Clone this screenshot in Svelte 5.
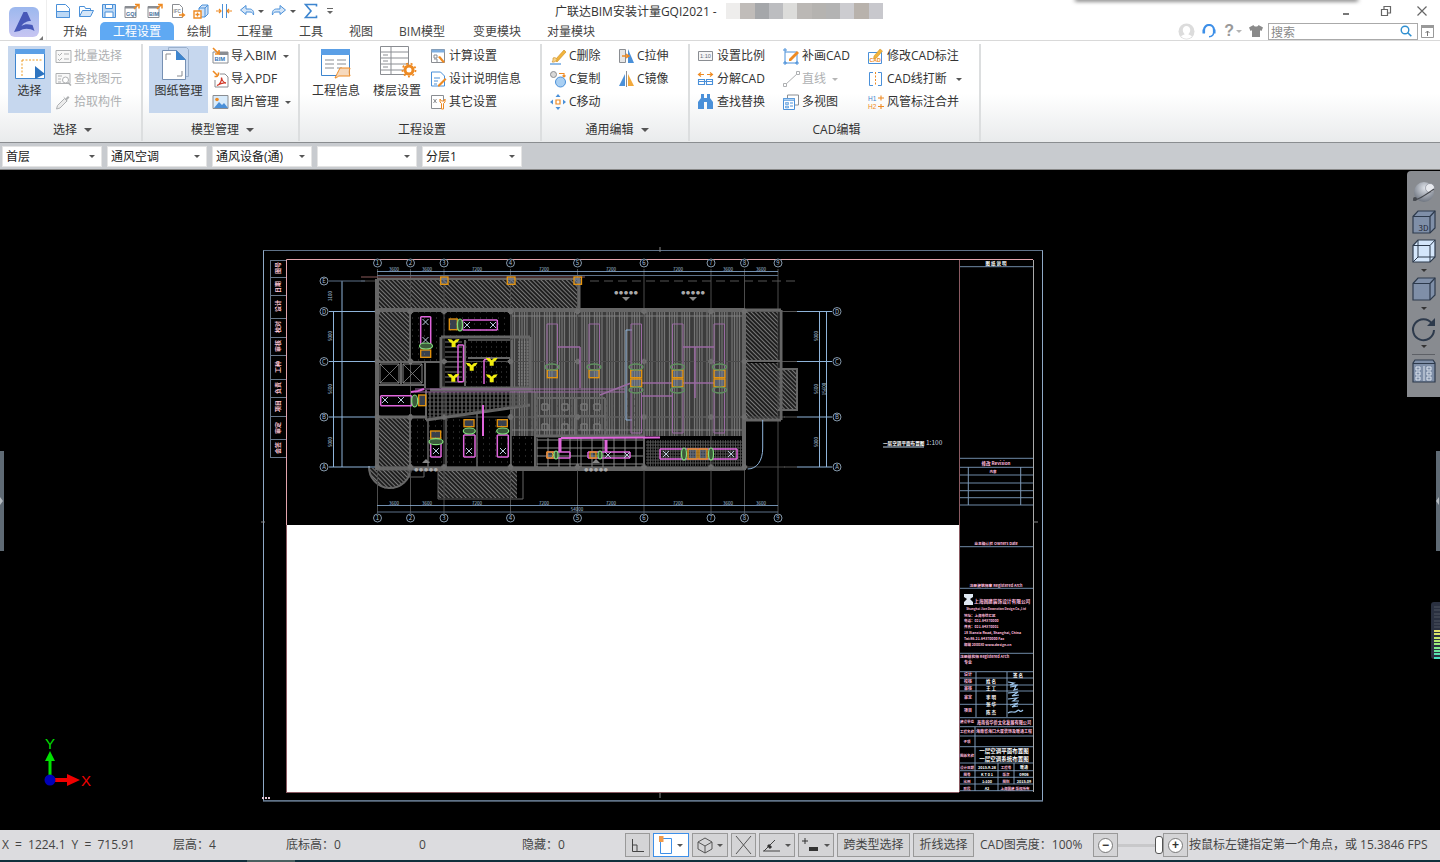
<script>
  const B = '#4a90d9', O = '#ee8a22', G = '#8a8d92', D = '#aeb0b2';
  const icons = {
    new: `<path d="M1.5 1.5h9l4 4v9h-13z" fill="#fff" stroke="${B}"/><path d="M1.5 8.5h13v6h-13z" fill="#bcd8f5" stroke="${B}"/>`,
    open: `<path d="M1.5 13.5v-10h5l1 2h5v2" fill="#fff" stroke="${B}"/><path d="M1.5 13.5l3-6h11l-3 6z" fill="#d5e6f8" stroke="${B}"/>`,
    save: `<path d="M1.5 1.5h13v13h-13z" fill="#bcd8f5" stroke="${B}"/><path d="M4.5 1.5h7v4h-7zM4 9h8v5.5H4z" fill="#fff" stroke="${B}"/>`,
    gqi: `<path d="M1 3.5h11v11H1z" fill="#fff" stroke="${G}"/><path d="M1 3h11v2.5H1z" fill="${G}"/><text x="2" y="12.5" font-size="5.4" font-weight="700" fill="#47709c">GQI</text><path d="M10 6l4-4M11 1.5h4v4" fill="none" stroke="${O}" stroke-width="1.5"/>`,
    bimq: `<path d="M1 3.5h11v11H1z" fill="#fff" stroke="${G}"/><path d="M1 3h11v2.5H1z" fill="${G}"/><text x="2" y="12.5" font-size="5.4" font-weight="700" fill="#47709c">BIM</text><path d="M10 6l4-4M11 1.5h4v4" fill="none" stroke="${O}" stroke-width="1.5"/>`,
    ifc: `<path d="M2.5 1.5h7l3 3v10h-10z" fill="#fff" stroke="${G}"/><text x="3.4" y="10" font-size="4.6" font-weight="700" fill="${G}">IFC</text><path d="M9 12h5M12 10l2.5 2-2.5 2" fill="none" stroke="${O}" stroke-width="1.3"/>`,
    box: `<path d="M6 5l3-3h6v9l-3 3H6z" fill="#cfe2f7" stroke="${B}"/><path d="M6 5h6v9M12 5l3-3" fill="none" stroke="${B}"/><path d="M1 8h7v7H1z" fill="#fff" stroke="${O}" stroke-width="1.4"/><path d="M4.5 9.5v4M2.5 11.5h4" stroke="${O}" stroke-width="1.3"/>`,
    sep: `<path d="M6.5 1v14M10.5 1v14" stroke="${B}"/><path d="M0 8h5M3 6l2 2-2 2M16 8h-5M13 6l-2 2 2 2" fill="none" stroke="${O}" stroke-width="1.2"/>`,
    undo: `<path d="M7 2.5L1.5 7 7 11.5V9h4c2 0 3 1 3.5 3 .7-3.5-1-6-4-6H7z" fill="#d5e6f8" stroke="${B}"/>`,
    redo: `<path d="M9 2.5l5.5 4.5L9 11.5V9H5c-2 0-3 1-3.5 3-.7-3.5 1-6 4-6H9z" fill="#d5e6f8" stroke="${B}"/>`,
    sigma: `<path d="M13.5 3.5V1.5h-11L8 8l-5.5 6.5h11v-2" fill="none" stroke="#3d85cf" stroke-width="1.6"/>`,
    batch: `<path d="M1 2.5h15v12H1z" fill="#f8f8f8" stroke="${D}"/><path d="M3 6l1.5 1.5L7 5M3 11l1.5 1.5L7 10M9 6h5M9 11h5" fill="none" stroke="${D}"/>`,
    find: `<path d="M1 2.5h14v10H1z" fill="#f8f8f8" stroke="${D}"/><path d="M3 5h4M3 8h3M3 11h3" stroke="${D}"/><circle cx="10.5" cy="9" r="3" fill="#fff" stroke="${D}"/><path d="M13 11.5l3 3" stroke="${D}" stroke-width="1.5"/>`,
    pick: `<path d="M1.5 15l1-3.5 7-7 2.5 2.5-7 7z" fill="#ececec" stroke="${D}"/><path d="M9 3l1.5 1.5L13 2l1.5 1.5-2.5 2.5L13.5 8 8 2.5z" fill="${D}"/>`,
    bim: `<path d="M1 4h15v11H1z" fill="#fff" stroke="${G}"/><path d="M7 4h9v3H7z" fill="${G}"/><text x="2.5" y="13.3" font-size="5.8" font-weight="700" fill="#3574b5">BIM</text><path d="M1 0l6 6M7 2v4H3" fill="none" stroke="${O}" stroke-width="1.6"/>`,
    pdf: `<path d="M1 0l5.5 5.5M6.5 1.5v4h-4" fill="none" stroke="${O}" stroke-width="1.6"/><path d="M8 3h5l3 3v10H3V9" fill="#fff" stroke="${G}"/><path d="M5 14.5c3-1 5-5 4.5-8 .5 3 2 5 4.5 5.5-3-.5-6 .5-9 2.5z" fill="none" stroke="#d13a2a" stroke-width="1.3"/>`,
    img: `<path d="M1 1.5h15v13H1z" fill="#d8ebfb" stroke="${G}"/><circle cx="5" cy="5.5" r="1.8" fill="${O}"/><path d="M2 14l5-6 3 3 2-2 4 5z" fill="${B}"/>`,
    calc: `<path d="M1.5 1.5h13v13h-13z" fill="#fff" stroke="${G}"/><path d="M1.5 1.5h13v3h-13z" fill="#7eaee0"/><path d="M4 7h3v3H4zM4 11h3v3" fill="none" stroke="${G}"/><path d="M8 9l5 6 2-1-5-6z" fill="${O}"/>`,
    design: `<path d="M1.5 1h9l4 4v10h-13z" fill="#fff" stroke="${B}"/><path d="M4 7h6M4 10h4M4 13h3" stroke="${B}"/><path d="M8 14l7-7 1.5 1.5-7 7H8z" fill="${O}"/>`,
    other: `<path d="M1.5 1.5h12v13h-12z" fill="#fff" stroke="${G}"/><path d="M3.5 5l3 4M6.5 5l-3 4" stroke="${G}"/><path d="M10 5v3l1.5 1.5V15h2V9.5L15 8V5l-1 2h-2.5z" fill="#fff" stroke="${O}"/>`,
    del: `<path d="M5 12L14 2l2 2-9 10z" fill="#f2b43c" stroke="#c98a1d" stroke-width=".6"/><path d="M3 10c2-1 3 0 4 1.5-1 2-3 3-5 2.5 1-1 1-2.5 1-4z" fill="#f6d28a" stroke="#c98a1d" stroke-width=".6"/><path d="M0 16h11" stroke="${B}" stroke-width="1.2"/>`,
    copy: `<circle cx="3.5" cy="3.5" r="3" fill="#d8d8d8" stroke="${G}"/><circle cx="10.5" cy="11" r="5" fill="#a9cff2" stroke="${B}"/><path d="M9 2.5h5v3M12.5 4.5l1.5 1.5 1.5-1.5" fill="none" stroke="${O}" stroke-width="1.1"/>`,
    move: `<path d="M6 6h4v4H6z" fill="#fff" stroke="${O}" stroke-width="1.2"/><path d="M8 0l2.5 3h-5zM8 16l2.5-3h-5zM0 8l3-2.5v5zM16 8l-3-2.5v5z" fill="${B}"/>`,
    stretch: `<path d="M1.5 1.5h6v13h-6z" fill="#e6e6e6" stroke="${G}"/><path d="M10 1l6 14h-6z" fill="${B}"/><path d="M4 8h6M8 6l3 2-3 2" fill="none" stroke="${O}" stroke-width="1.3"/>`,
    mirror: `<path d="M7 3v12H1z" fill="${B}"/><path d="M10 3v12h6z" fill="#f2a93c"/><path d="M8.5 0v16" stroke="${G}"/>`,
    scale: `<path d="M.5 3.5h14v9H.5z" fill="#f6f6f6" stroke="${G}"/><text x="2" y="10" font-size="5.6" fill="#5d6b7a">1:10</text>`,
    draw: `<path d="M2 4h12v11H2z" fill="#fff" stroke="${B}"/><path d="M0 2h4M2 0v4M12 15h4M14 13v4M0 15h4M2 13v4" stroke="${B}"/><path d="M6 11l8-8 2 2-8 8H6z" fill="${O}"/>`,
    edit: `<path d="M.5 4.5h13v11H.5z" fill="#fff" stroke="${B}"/><text x="1.5" y="14" font-size="5.2" font-weight="700" fill="${O}">CAD</text><path d="M6 8l6-7 2.5 2-6 7-3 1z" fill="#f2b43c" stroke="#c98a1d" stroke-width=".5"/>`,
    explode: `<path d="M0 3.5h6M3 1.5L.5 3.5 3 5.5M15 3.5H9M12 1.5l2.5 2-2.5 2" fill="none" stroke="${O}" stroke-width="1.2"/><path d="M.5 8.5h6v5h-6zM8.5 8.5h6v5h-6zM.5 10.5h14" fill="none" stroke="${B}" stroke-width="1.1"/>`,
    line: `<path d="M2 14L15 2" stroke="${D}"/><path d="M.5 12.5h3v3h-3zM13.5.5h3v3h-3z" fill="#fff" stroke="${D}"/>`,
    brk: `<path d="M5 1.5H1.5v13H5M10 1.5h3.5v13H10" fill="none" stroke="${B}"/><path d="M7.5 1v14" stroke="${O}" stroke-dasharray="2 1.5"/>`,
    binoc: `<path d="M3 0h3v4h3V0h3v4l3 4v7H9V8H6v7H0V8l3-4z" fill="${B}"/>`,
    multi: `<path d="M4.5 1h11v10h-11z" fill="#fff" stroke="${G}"/><path d="M.5 4.5h11v11H.5z" fill="#fff" stroke="${B}"/><path d="M.5 4.5h11v2H.5zM2.5 8.5h3v2h-3zM2.5 12h3v2h-3z" fill="#a9cff2" stroke="${B}" stroke-width=".6"/><path d="M7 9h3M7 12h3" stroke="${B}"/>`,
    merge: `<text x="0" y="6.5" font-size="6.5" fill="#3d85cf">H1</text><text x="0" y="15" font-size="6.5" fill="${O}">H2</text><path d="M10 4h6M13 1.5v5M10 12.5h6M13 10v5" stroke="${O}" stroke-width="1.1"/>`,
    bselect: `<path d="M.5.5h29v29H.5z" fill="#fff" stroke="#3d85cf"/><path d="M0 0h30v5H0z" fill="#5b9fe6"/><path d="M7 11h20M7 11v16" fill="none" stroke="#ee9b22" stroke-dasharray="2 1.5"/><path d="M20 17l10 8-10 5z" fill="#2d74c0"/>`,
    bdraw: `<path d="M6.5.5h18l2 2v27h-20z" fill="none" stroke="#9bb0cc"/><path d="M.5 3.5h14l9 9v20H.5z" fill="#fff" stroke="#7690b3"/><path d="M14 3l10 10H14z" fill="#3d85cf"/><path d="M4 13V7h5M20 24v5h-5" fill="none" stroke="${G}"/>`,
    binfo: `<path d="M.5 1.5h28v26H.5z" fill="#fff" stroke="#3d85cf"/><path d="M0 1h29v6H0z" fill="#5b9fe6"/><path d="M4 12h9M4 16h9M4 20h9M16 12h9M16 16h9M16 20h5" stroke="${G}"/><path d="M19 20h10c-1 3-1 5 0 8H18c-1 0-2 2-4 2 1.5-3 3-6 5-10z" fill="#f6d9bd" stroke="${O}"/>`,
    bfloor: `<path d="M.5.5h28v28H.5z" fill="#fff" stroke="${G}"/><path d="M.5 6h28M.5 12h28M.5 18h28M.5 24h28M11 .5v28" stroke="${G}" fill="none"/><path d="M3 9h5M3 15h5M3 21h5" stroke="${G}"/><path d="M28.5 8v8" stroke="${G}"/><circle cx="29" cy="24" r="4" fill="#fff" stroke="${O}" stroke-width="3"/><circle cx="29" cy="24" r="6.5" fill="none" stroke="${O}" stroke-width="1.8" stroke-dasharray="2 2.5"/>`
  };

  const groups = [
    { w: 143, label: '选择', arrow: true, cols: [
      { big: 1, ml: 8, w: 43, icon: 'bselect', s: 30, text: '选择', active: 1 },
      { ml: 4, items: [['batch','批量选择',1],['find','查找图元',1],['pick','拾取构件',1]] } ] },
    { w: 157, label: '模型管理', arrow: true, cols: [
      { big: 1, ml: 6, w: 59, icon: 'bdraw', s: 33, text: '图纸管理', active: 1 },
      { ml: 4, items: [['bim','导入BIM',0,1],['pdf','导入PDF'],['img','图片管理',0,1]] } ] },
    { w: 242, label: '工程设置', cols: [
      { big: 1, ml: 12, w: 48, icon: 'binfo', s: 31, text: '工程信息' },
      { big: 1, ml: 13, w: 48, icon: 'bfloor', s: 35, text: '楼层设置' },
      { ml: 9, items: [['calc','计算设置'],['design','设计说明信息'],['other','其它设置']] } ] },
    { w: 148, label: '通用编辑', arrow: true, cols: [
      { ml: 8, w: 68, items: [['del','C删除'],['copy','C复制'],['move','C移动']] },
      { w: 60, items: [['stretch','C拉伸'],['mirror','C镜像']] } ] },
    { w: 291, label: 'CAD编辑', cols: [
      { ml: 8, w: 85, items: [['scale','设置比例'],['explode','分解CAD'],['binoc','查找替换']] },
      { w: 85, items: [['draw','补画CAD'],['line','直线',1,1],['multi','多视图']] },
      { items: [['edit','修改CAD标注'],['brk','CAD线打断',0,2],['merge','风管标注合并']] } ] }
  ];
  const tabs = ['开始','工程设置','绘制','工程量','工具','视图','BIM模型','变更模块','对量模块'];
  const quick = [['new',0],['open',0],['save',0],['gqi',0],['bimq',0],['ifc',0],['box',0],['sep',0],['undo',1],['redo',1],['sigma',0]];
  const selects = ['首层','通风空调','通风设备(通)','','分层1'];
  const blur = ['#eeedec','#c0bcb9','#a5a7aa','#bcbdc0','#dcdcda','#bbb8b5','#b5b3b0','#b3b3b3','#ccccd0','#b8b2ac','#c8c8cd'];

  // ---- CAD drawing, page coordinates ----
  const layers = [];
  const idx = {};
  function seg(c, w, x1, y1, x2, y2) {
    const k = c + '|' + w;
    if (!(k in idx)) { idx[k] = layers.length; layers.push({ stroke: c, width: w, d: '' }); }
    layers[idx[k]].d += `M${x1} ${y1}L${x2} ${y2}`;
  }
  function box(c, w, x, y, x2, y2) {
    seg(c, w, x, y, x2, y); seg(c, w, x2, y, x2, y2); seg(c, w, x2, y2, x, y2); seg(c, w, x, y2, x, y);
  }
  function dots(c, x1, y1, x2, y2, step) {
    for (let x = x1; x < x2; x += step) for (let y = y1; y < y2; y += step) seg(c, 1, x, y, x + 1, y);
  }
  const BL = '#8fb4da', WALL = '#666', DIM = '#5d7188', GR = '#4c4c4c', MAG = '#e066dc', MUT = '#9a6aa2', ORG = '#e8960e';
  const cols = [377.5, 410.5, 444, 510.5, 577.5, 644, 711, 744.5, 778];
  const rows = [311.5, 361.5, 417, 467];

  // stripes
  for (let x = 512, i = 0; x < 745; x += 2.5, i++) seg(i % 5 === 2 ? '#3c3c3c' : '#747474', 1.2, x, 312, x, 436);
  for (const y of [316, 361.5, 417, 430]) seg('#808080', 1, 512, y, 745, y);
  // clutter dots in dark rooms
  dots('#4a4a4a', 412, 312, 440, 361, 6);
  dots('#4a4a4a', 444, 312, 512, 337, 6);
  dots('#4a4a4a', 411, 420, 535, 468, 6);
  dots('#4a4a4a', 466, 342, 512, 388, 5);
  dots('#4a4a4a', 536, 392, 644, 436, 7);
  // grid
  for (const x of cols) { seg(GR, 1, x, 269, x, 513); }
  seg(GR, 1, 361, 281, 377, 281);
  for (const y of rows) seg(GR, 1, 377, y, 785, y);
  // axis lines
  for (const y of rows) {
    seg(BL, 1, 329, y, 375, y);
    seg(BL, 1, 797, y, 832, y);
    seg('#555', 1, 784, y, 797, y);
  }
  seg(DIM, 1, 329, 281, 365, 281);
  seg('#8a5a5a', 1.2, 361, 277, 585, 277);
  for (let x = 590; x < 796; x += 14) seg('#555', 1.2, x, 281, x + 9, 281);
  // dims
  seg(BL, .8, 377, 271.5, 778, 271.5); seg(DIM, 1, 377, 275.5, 778, 275.5);
  seg(BL, .8, 377, 505.5, 778, 505.5); seg(DIM, 1, 377, 512, 778, 512);
  seg(BL, 1, 333.5, 311, 333.5, 467); seg(BL, 1, 342, 281, 342, 467);
  seg(BL, 1, 819.5, 311, 819.5, 467); seg(BL, 1, 826.5, 311, 826.5, 467);

  // walls
  const W = (x, y, x2, y2, w = 2) => seg(WALL, w, x, y, x2, y2);
  W(377, 279, 377, 470, 4); W(376, 310, 745, 310, 4); W(377, 279, 580, 279, 2); W(579, 279, 579, 310, 3);
  W(410, 311, 410, 362, 2); W(377, 362, 440, 362, 2); W(377, 468.5, 745, 468.5, 4); W(744, 310, 744, 470, 4);
  W(441, 337, 530, 337, 3); W(441, 337, 441, 388, 3); W(530, 337, 530, 392, 3); W(441, 388, 530, 388, 3);
  W(465, 340, 465, 386); W(468, 358, 510, 358, 2); W(468, 340, 510, 340, 1.5); W(512, 340, 512, 388, 2);
  W(425, 362, 425, 388, 2); W(401, 362, 401, 385, 2); W(378, 385, 425, 385, 2); W(430, 390, 530, 390, 3);
  W(426, 390, 426, 420, 2); W(426, 420, 530, 405, 3); W(378, 417, 426, 417, 3);
  W(410, 417, 410, 468, 2); W(428, 420, 428, 468, 1.5); W(446, 416, 446, 468, 1.5); W(477, 412, 477, 468, 1.5); W(511, 410, 511, 468, 1.5);
  W(535, 392, 535, 468, 2); W(535, 436, 644, 436, 3); W(644, 392, 644, 468, 2); W(537, 398, 605, 398, 2); W(537, 416, 605, 416, 2);
  W(576, 398, 576, 436, 2); W(605, 398, 605, 436, 2);
  for (let y = 342; y < 386; y += 5) { seg('#777', 1, 445, y, 462, y); }
  // column blocks at grid crossings
  for (const x of cols.slice(0, 8)) for (const y of rows) box('#6e6e6e', 2.5, x - 1.5, y - 1.5, x + 1.5, y + 1.5);
  // rooms squares
  for (const [x, y] of [[545,407],[565,407],[584,407],[597,407],[545,427],[565,427],[584,427],[597,427]]) box('#777', 1.5, x - 3, y - 3, x + 3, y + 3);
  // elevator X
  for (const x of [380, 403]) { box('#888', 1, x, 364, x + 19, 383); seg('#888', .8, x, 364, x + 19, 383); seg('#888', .8, x + 19, 364, x, 383); }
  // lower grid
  for (let x = 537; x < 644; x += 11) seg('#888', 1, x, 438, x, 467);
  for (let y = 440; y < 467; y += 8) seg('#888', 1, 537, y, 643, y);
  // dotted core grid
  for (let x = 430; x < 530; x += 4) seg('#5a5a5a', 1.5, x, 392, x, 418 - (x - 430) * .13);
  for (let y = 394; y < 416; y += 4) seg('#5a5a5a', 1, 428, y, 528 - (y > 405 ? (y - 405) * 6 : 0), y);
  for (let x = 518; x < 528; x += 3) for (let y = 342; y < 386; y += 3) seg('#8a8a8a', 1, x, y, x + 1.5, y);
  // dense lower right
  for (let x = 648; x < 742; x += 2.5) seg('#4a4a4a', 1, x, 440, x, 466);
  for (let y = 442; y < 466; y += 3) seg('#565656', 1, 646, y, 742, y);
  // east block
  W(743, 310, 781, 310, 3); W(781, 310, 781, 420, 3); W(743, 420, 781, 420, 3); W(745, 361, 780, 361, 2);
  // muted ducts
  for (const x of [547, 589, 631, 672.5, 714]) box(MUT, 1, x, 324, x + 10.5, 370);
  for (const x of [631, 672.5, 714]) box(MUT, 1, x, 387, x + 10.5, 433);
  seg(MUT, 1.5, 558, 347, 580, 347); seg(MUT, 1.5, 580, 347, 580, 388); seg(MUT, 1.5, 683, 347, 714, 347); seg(MUT, 1.5, 695, 347, 695, 398);
  for (const y of [389, 392]) seg(MUT, 1, 415, y, 625, y);
  seg(MUT, 1.5, 600, 395, 631, 383); seg(MUT, 1.5, 641, 383, 672, 383); seg(MUT, 1.5, 683, 383, 714, 383);
  seg(MUT, 1.5, 642, 396, 672, 396);
  seg(BL, 1, 626, 330, 626, 420); seg(BL, 1, 626, 330, 632, 330); seg(BL, 1, 626, 420, 632, 420);
  // magenta ducts
  const M = (...a) => box(MAG, 1.5, ...a);
  M(420.7, 316.7, 430.7, 348.3); M(462.7, 320, 497.3, 330); M(380.7, 395.7, 411.7, 405.7);
  M(430.7, 441.7, 441, 457); M(463.7, 435, 475, 457); M(497.3, 435, 508.3, 457);
  M(458, 345, 463.5, 381.7); M(660, 449, 737, 459); M(588, 452, 630, 458); M(547, 452, 570, 458);
  seg(MAG, 2, 411, 392, 418, 391); seg(MAG, 2, 418, 391, 424, 389); seg(MAG, 2, 483, 405, 483, 436);
  seg(MAG, 2, 561, 438, 660, 437.5); seg(MAG, 3, 560, 438, 560, 452); seg(MAG, 3, 606, 440, 606, 452);
  seg(MAG, 1.5, 484, 360, 484, 384); seg(MAG, 1.5, 484, 360, 490, 358);
  // diffuser marks
  for (const [x, y] of [[425.5,322],[425.5,340],[467,325],[493,325],[385,400],[401,400],[436,451],[469,451],[503,451],[554,455],[608,455],[627,455],[666,454],[731,454]]) {
    seg('#b8c8dc', 1, x - 3, y - 3, x + 3, y + 3); seg('#b8c8dc', 1, x + 3, y - 3, x - 3, y + 3);
  }
  const oranges = [[449.3,319,457.3,329.7],[420.7,350,430.7,357.3],[418.7,395,425.7,405.7],[430.7,431,440.7,438.3],[464,419.7,474,426.7],[497.3,419.7,507.3,426.7],[440.7,277,448,284.3],[507.3,277,515,284.3],[574,277,581.5,284.3],[547.3,370,557.3,377.7],[589,370,599,377.7],[630.7,370,641.7,377.7],[630.7,379,641.7,386.7],[672.3,370,683,377.7],[672.3,379,683,386.7],[714,370,725,377.7],[714,379,725,386.7],[688,449,697,459],[699,449,707,459],[547,452,553,458],[590,452,596,458]];
  const greens = [[460,325,2.5,6],[426,346,6.5,3],[414.7,401,3,6],[436,441.7,7,3],[469.3,431,6,3],[502.7,431,6,3],[684,454,2.5,6],[711,454,2.5,6],[556,455,2,4],[600,455,2,4]];
  const dull = [[552,367,7,3],[594,367,7,3],[636,367,7,3],[636,390,7,3],[677.5,367,7,3],[677.5,390,7,3],[719.5,367,7,3],[719.5,390,7,3]];
  const yellows = [[453.6,343],[471.7,366.7],[491.7,361.7],[453.3,377.7],[491.7,378.3]];
  const hatches = [[378,280,200,29],[378,311,32,50],[377,417,33,52],[438,470,79,28],[746,312,32,49],[746,363,32,56],[778,369,19,41]];
  const marks = [[626,295],[693,295],[426,472],[596,472]];

  // labels
  const dimsTop = [[394,'3600'],[427,'3600'],[477,'7200'],[544,'7200'],[611,'7200'],[678,'7200'],[728,'3600'],[761,'3600']];
  const dimsSide = [[332,296,'3100'],[332,336,'5000'],[332,389,'5600'],[332,442,'5000'],[818,336,'5000'],[818,389,'5600'],[818,442,'5000'],[825.5,389,'15600']];
  const circlesTop = cols.map((x, i) => [x, 263, String(i + 1)]);
  const circlesBottom = cols.map((x, i) => [x, 518, String(i + 1)]);
  const circlesLeft = [[324,281,'E'],[324,311.5,'D'],[324,361.5,'C'],[324,417,'B'],[324,467,'A']];
  const circlesRight = [[837,311.5,'D'],[837,361.5,'C'],[837,417,'B'],[837,467,'A']];
  const circles = [...circlesTop, ...circlesBottom, ...circlesLeft, ...circlesRight];

  const leftRows = [260,277,295,318,337,355,379,397,416,439,457];
  const leftLabels = [[278,268,'图号'],[278,287,'日期'],[278,306,'设计'],[278,327,'校对'],[278,346,'审核'],[278,367,'工种'],[278,388,'负责'],[278,406,'项目'],[278,428,'审定'],[278,448,'会签']];

  const tb = [266.7,458.3,467.3,475,483,490.7,497.7,505,546.7,588.3,653.3,671.7,678,685,691,704.3,717.7,726.7,736,746.7,763,770.7,777.3,784,790.7];
  const tbt = [
    [996,264.5,4.5,'图 纸 说 明','#fff'],[996,464.5,4.5,'修改 Revision','#fbd'],[993,472.5,3.5,'内容','#fbd'],
    [996,545,3.8,'业主确认栏 Owners Date','#fbd'],[996,586.5,3.8,'注册建筑师章 Registered Arch','#fbd'],
    [974,602.5,4.7,'上海国建装饰设计有限公司','#fbd','s'],[996,610,3,'Shanghai Jian Decoration Design Co.,Ltd','#fbd'],
    [964,617,3.5,'地址：上海市徐汇区','#fbd','s'],[964,622,3.5,'电话：021-64370000','#fbd','s'],[964,628,3.5,'传真：021-64370001','#fbd','s'],[964,634,3.5,'18 Xianxia Road, Shanghai, China','#fbd','s'],[964,640,3.5,'Tel:86-21-64370000 Fax','#fbd','s'],[964,646,3.5,'邮编 200030 www.design.cn','#fbd','s'],
    [960,658,3.8,'注册结构师 Registered Arch','#fbd','s'],
    [968,664,4,'专业','#fbd'],[968,676,4,'设计','#fbd'],[968,683,4,'校核','#fbd'],[968,690,4,'审核','#fbd'],[968,699,4,'审定','#fbd'],[968,712,4,'项目','#fbd'],
    [991,683,4.5,'姓 名','#fff'],[991,690,4.5,'王 工','#fff'],[991,699,4.5,'李 明','#fff'],[991,706,4.5,'张 华','#fff'],[991,714,4.5,'陈 杰','#fff'],
    [1018,677,4.5,'签 名','#fff'],
    [967,723,3.5,'建设单位','#fbd'],[1004,723.5,4.2,'海南省华侨文化发展有限公司','#fbd'],[967,733,3.5,'工程名称','#fbd'],[1004,733,4,'海南省海口大厦装饰及暖通工程','#fbd'],[967,743,3.5,'子项','#fbd'],[967,757,3.5,'图纸名称','#fbd'],
    [1004,753,5.5,'一层空调平面布置图','#fff'],[1004,761,5.5,'一层空调系统布置图','#fff'],
    [967,769,3.5,'设计日期','#fbd'],[987,769,3.8,'2015.9.28','#fff'],[1006,769,3.5,'工程号','#fbd'],[1024,769,4,'暖通','#fff'],
    [967,776,3.5,'图号','#fbd'],[987,776,3.8,'K T 0 1','#fff'],[1006,776,3.5,'版次','#fbd'],[1024,776,4,'0906','#fff'],
    [967,783,3.5,'比例','#fbd'],[987,783,3.8,'1:100','#fff'],[1006,783,3.5,'图别','#fbd'],[1024,783,3.8,'2015.09','#fff'],
    [967,790,3.5,'阶段','#fbd'],[987,790,3.8,'A2','#fff'],[1015,790,3.5,'上海国建 版权所有','#fbd']
  ];

  const levels = ['#3c4250','#3c4250','#3c4250','#3c4250','#3c4250','#3c4250','#3c4250','#e5e36a','#d8e56a','#c8e86a','#b4ea70','#9cec7c','#82ec8c','#6ce8a0','#5ae4b0','#4adfc0'];
</script>

{#snippet ic(name, size = 16)}
  <svg class="ic" width={size} height={size} viewBox={name[0] === 'b' && size > 20 ? `0 0 ${size} ${size}` : '0 0 16 16'}>{@html icons[name]}</svg>
{/snippet}

<div class="app">
  <header class="top">
    <div class="logoCell">
      <div class="logo">
        <svg width="30" height="30" viewBox="0 0 30 30">
          <defs><linearGradient id="lg" x1="0" y1="0" x2="0" y2="1"><stop offset="0" stop-color="#9cb8ee"/><stop offset="1" stop-color="#c7c5f2"/></linearGradient></defs>
          <rect width="30" height="30" rx="6" fill="url(#lg)"/>
          <path d="M5 25L14.5 5h3.5l4 9c-4 0-8 2-9.5 5 3-2 6-2 11-1l2 6c-5-3-11-3-15 0z" fill="#4758b8"/>
        </svg>
      </div>
      <span class="grip"></span>
    </div>
    <div class="topMain">
      <div class="titleRow">
        <div class="quick">
          {#each quick as q}
            <span class="qi">{@render ic(q[0])}{#if q[1]}<i class="tri"></i>{/if}</span>
          {/each}
          <span class="more"></span>
        </div>
        <div class="title">广联达BIM安装计量GQI2021 -</div>
        <div class="blur">{#each blur as b}<span style:background={b}></span>{/each}</div>
        <div class="winBtns">
          <svg width="12" height="12" viewBox="0 0 12 12"><path d="M0 8h6v2H0z" fill="#777"/></svg>
          <svg width="12" height="12" viewBox="0 0 12 12"><path d="M1.5 4.5h6v6h-6zM4 4V1.5h6.500V8H8" fill="none" stroke="#666" stroke-width="1.2"/></svg>
          <svg width="12" height="12" viewBox="0 0 12 12"><path d="M1.5 1.5l9 9M10.5 1.5l-9 9" stroke="#666" stroke-width="1.2"/></svg>
        </div>
      </div>
      <div class="tabRow">
        <nav class="tabs">
          {#each tabs as t, i}<span class="tab" class:on={i === 1} class:wideTab={i === 6}>{t}</span>{/each}
        </nav>
        <div class="tools">
          <svg width="17" height="17" viewBox="0 0 17 17"><circle cx="8.5" cy="8.5" r="8" fill="#dcdcdc"/><path d="M8.5 3a3.7 3.7 0 0 1 3.7 4c0 2-1 3.5-2 4.2 1.5.5 3 1.2 3.800 2.3A8 8 0 0 1 3 13.5c.8-1.1 2.3-1.8 3.800-2.3-1-.7-2-2.200-2-4.200A3.7 3.7 0 0 1 8.500 3z" fill="#fff"/></svg>
          <svg class="head" width="14" height="14" viewBox="0 0 14 14"><path d="M2 9V6a5 5 0 0 1 10 0v3" fill="none" stroke="#3d8fe8" stroke-width="2.2"/><path d="M.5 5.5h2.500v4H.5zM11 5.500h2.500v4H11z" fill="#3d8fe8"/><path d="M11.500 9c0 3-2 3.500-4.500 3.800" fill="none" stroke="#3d8fe8" stroke-width="1.5"/></svg>
          <span class="q">?</span><i class="tri lite"></i>
          <svg class="shirt" width="14" height="14" viewBox="0 0 14 14"><path d="M4.500 1L0 3.500l1.500 3.500 1.500-.7V13h8V6.300l1.500.7L14 3.500 9.500 1C9 3 5 3 4.500 1z" fill="#8a8a8a"/></svg>
          <div class="search"><span>搜索</span>
            <svg width="12" height="12" viewBox="0 0 12 12"><circle cx="5" cy="5" r="3.8" fill="none" stroke="#2f8fd0" stroke-width="1.4"/><path d="M7.800 7.800l3.500 3.500" stroke="#2f8fd0" stroke-width="1.6"/></svg>
          </div>
          <svg class="up" width="13" height="13" viewBox="0 0 13 13"><path d="M.5.5h12v12H.5z" fill="#fff" stroke="#999"/><path d="M0 0h13v3H0z" fill="#999"/><path d="M6.500 11V6M4.500 8l2-2 2 2" fill="none" stroke="#777"/></svg>
        </div>
      </div>
    </div>
  </header>

  <section class="ribbon">
    {#each groups as g}
      <div class="group" style:width="{g.w}px">
        <div class="gbody">
          {#each g.cols as c}
            {#if c.big}
              <div class="big" class:active={c.active} style:margin-left="{c.ml}px" style:width="{c.w}px">
                <span class="bigIcon">{@render ic(c.icon, c.s)}</span>
                <span class="bigText">{c.text}</span>
              </div>
            {:else}
              <div class="col" style:margin-left="{c.ml || 0}px" style:width={c.w ? c.w + 'px' : null}>
                {#each c.items as it}
                  <div class="item" class:off={it[2]}>
                    {@render ic(it[0])}<span>{it[1]}</span>
                    {#if it[3]}<i class="tri" class:wide={it[3] === 2} class:lite={it[2]}></i>{/if}
                  </div>
                {/each}
              </div>
            {/if}
          {/each}
        </div>
        <div class="glabel">{g.label}{#if g.arrow}<i class="tri big3"></i>{/if}</div>
      </div>
    {/each}
  </section>

  <section class="selbar">
    {#each selects as s}
      <div class="sel"><span>{s}</span><i class="tri"></i></div>
    {/each}
  </section>

  <main class="canvas">
    <svg class="cad" width="1440" height="660" viewBox="0 170 1440 660">
      <defs>
        <pattern id="ht" width="3" height="3" patternUnits="userSpaceOnUse" patternTransform="rotate(45)">
          <rect width="3" height="3" fill="#1a1a1a"/><path d="M0 1.5h3" stroke="#7a7a7a" stroke-width="1.1"/>
        </pattern>
      </defs>
      <rect x="263.5" y="250.5" width="779" height="550.5" fill="#000" stroke="#8fa9c6"/>
      <path d="M263.5 250.5h779" stroke="#5f7288"/><path d="M263.5 800.5h779" stroke="#5f7288"/>
      <rect x="286" y="525" width="673" height="267.5" fill="#fff"/>
      <path d="M286.5 525V259.5H1033" fill="none" stroke="#e2a5ad"/>
      <path d="M286.5 525V792M286 792.5H959" fill="none" stroke="#8a5a62"/>
      <path d="M959.5 260V792" stroke="#8a5a62"/>
      <path d="M1033.5 260V792" stroke="#aaa"/>
      <path d="M660 247v5M660 793v5M1033 522h5M261 522h4" stroke="#888"/>

      <rect x="512" y="311" width="233" height="125" fill="#3c3c3c"/>
      {#each hatches as h}
        <rect x={h[0]} y={h[1]} width={h[2]} height={h[3]} fill="url(#ht)"/>
      {/each}
      <path d="M369 468a21 21 0 0 0 42 0z" fill="url(#ht)"/>
      <path d="M369 466a21 21 0 0 0 42 2" fill="none" stroke="#666" stroke-width="2"/>
      <path d="M408 469h16v8h-16zM438 470h85v29h-85z" fill="none" stroke="#666"/>
      <path d="M420 469h140v2H420zM560 469h170v2H560z" fill="#666"/>

      {#each layers as l}
        <path d={l.d} stroke={l.stroke} stroke-width={l.width} fill="none"/>
      {/each}

      <path d="M762.7 420v28c0 13-6 21-15 21" fill="none" stroke={BL}/>
      <path d="M778 369h19v41h-19" fill="none" stroke="#666" stroke-width="2"/>

      {#each oranges as o}
        <rect x={o[0]} y={o[1]} width={o[2] - o[0]} height={o[3] - o[1]} fill="#7e8ea8" fill-opacity=".45" stroke={ORG} stroke-width="1.3"/>
      {/each}
      {#each dull as g}
        <ellipse cx={g[0]} cy={g[1]} rx={g[2]} ry={g[3]} fill="none" stroke="#5f8f5f" stroke-width="1.5"/>
      {/each}
      {#each greens as g}
        <ellipse cx={g[0]} cy={g[1]} rx={g[2]} ry={g[3]} fill="#3a5a3a" stroke="#82e07c" stroke-width="1.2"/>
      {/each}
      {#each yellows as y}
        <path d="M{y[0] - 6} {y[1] - 4}l4 .5 2 2 2-2 4-.5-2 3-2 1v4h-4v-4l-2-1z" fill="#f2ee10"/>
      {/each}
      {#each marks as m}
        <text class="t" x={m[0]} y={m[1]} font-size="4" fill="#aaa" text-anchor="middle">● ● ● ● ●</text>
        <path d="M{m[0] - 4} {m[1] + (m[1] < 400 ? 2 : -9)}h8l-4 {m[1] < 400 ? 4 : -4}z" fill="#888"/>
      {/each}

      {#each circles as c}
        <circle cx={c[0]} cy={c[1]} r="4" fill="#000" stroke="#a5bdd4" stroke-width=".8"/>
        <text class="t" x={c[0]} y={c[1] + 2.2} font-size="6" fill="#a5bdd4" text-anchor="middle">{c[2]}</text>
      {/each}
      {#each dimsTop as d}
        <text class="t" x={d[0]} y="271" font-size="4.5" fill="#a9c4df" text-anchor="middle">{d[1]}</text>
        <text class="t" x={d[0]} y="504.5" font-size="4.5" fill="#a9c4df" text-anchor="middle">{d[1]}</text>
      {/each}
      <text class="t" x="577" y="511" font-size="4.5" fill="#a9c4df" text-anchor="middle">54000</text>
      {#each dimsSide as d}
        <text class="t" transform="rotate(-90 {d[0]} {d[1]})" x={d[0]} y={d[1]} font-size="4.5" fill="#a9c4df" text-anchor="middle">{d[2]}</text>
      {/each}

      <text class="t" x="883" y="445" font-size="4.6" font-weight="700" fill="#fff">一层空调平面布置图</text>
      <text class="t" x="926" y="445" font-size="6.5" fill="#c8d4e0">1:100</text>
      <path d="M883 447h41" stroke="#b8cde2"/>

      {#each leftRows as y}<path d="M270 {y}.5h16" stroke="#66768a"/>{/each}
      <path d="M270.5 260v197" stroke="#66768a"/>
      {#each leftLabels as l}
        <text class="t" transform="rotate(-90 {l[0]} {l[1]})" x={l[0]} y={l[1] + 2} font-size="6" font-weight="700" fill="#ffc4d4" text-anchor="middle">{l[2]}</text>
      {/each}

      {#each tb as y}<path d="M960 {y}h73" stroke="#6f8aa8"/>{/each}
      <path d="M968.3 467v38M1020.7 467v38M976 672v45M1007 672v45M975 727v36M975 763v28M998 763v28M1014 763v21" stroke="#7e9ab8"/>
      {#each tbt as t}
        <text class="t" x={t[0]} y={t[1]} font-size={t[2]} font-weight="700" fill={t[4]} text-anchor={t[5] ? 'start' : 'middle'}>{t[3]}</text>
      {/each}
      <path d="M964 594h9v3l-3 2 3 3v3h-9v-3l3-3-3-2z" fill="#dfe8f2"/>
      <path d="M1008 682l6 1-4 2 8 0M1010 687l6-1-2 4 4-1M1008 693l10-1-6 4 7-1M1008 699l9-1-4 3 6 0M1010 705l8-2-6 4 6-1M1008 713c4-3 6 1 9-2s2 3 6-1" fill="none" stroke="#9cc4ea" stroke-width="1.2"/>
      <path d="M262 798h9" stroke="#e6c8d8" stroke-width="2" stroke-dasharray="2 1"/>

      <path d="M48.500 775v-14h-3.500l5-10 5 10h-3.500v14z" fill="#00e000"/>
      <path d="M53 778h14v-4l13 6-13 6v-4H53z" fill="#f00000"/>
      <circle cx="50" cy="780" r="5.5" fill="#0000b8"/>
      <text class="t axisT" x="50" y="749" fill="#00e000" text-anchor="middle">Y</text>
      <text class="t axisT" x="86" y="785.5" fill="#f00000" text-anchor="middle">X</text>
    </svg>

    <div class="handle left"><i></i></div>
    <div class="handle right"><i></i></div>

    <aside class="side">
      <svg width="24" height="22" viewBox="0 0 24 22"><defs><radialGradient id="orb" cx=".55" cy=".3" r=".8"><stop offset="0" stop-color="#dfe3ea"/><stop offset="1" stop-color="#5f6672"/></radialGradient></defs><circle cx="12" cy="11" r="10" fill="url(#orb)"/><circle cx="18" cy="7" r="4.5" fill="#e8eaef" stroke="#6a6f7a" stroke-width=".5"/><path d="M1 19c4 1 14-6 21-11" fill="none" stroke="#45484e" stroke-width="1.2"/><circle cx="3" cy="18" r="2" fill="#45484e"/></svg>
      <svg class="s1" width="24" height="24" viewBox="0 0 24 24"><path d="M1 6.5l5-5.500h17v17l-5 5H1z" fill="#7f8fa8" stroke="#2d3a4c" stroke-width="1.2"/><path d="M1 6.5h17V23M18 6.500L23 1" fill="none" stroke="#2d3a4c" stroke-width="1.2"/><text class="t" x="6.5" y="20.5" font-size="8" fill="#1c2533">3D</text></svg>
      <svg class="s2" width="24" height="24" viewBox="0 0 24 24"><path d="M1 6.5l5-5.500h17v17l-5 5H1z" fill="#d4e6fb" stroke="#2d3a4c" stroke-width="1.2"/><path d="M1 6.5h17V23M18 6.500L23 1M6 1v17h17M6 18l-5 5" fill="none" stroke="#2d3a4c" stroke-width="1"/></svg>
      <i class="darr"></i>
      <svg class="s3" width="24" height="24" viewBox="0 0 24 24"><path d="M1 6.5l5-5.500h17v17l-5 5H1z" fill="#7f8fa8" stroke="#2d3a4c" stroke-width="1.2"/><path d="M1 6.5h17V23M18 6.500L23 1" fill="none" stroke="#2d3a4c" stroke-width="1.2"/></svg>
      <i class="darr"></i>
      <svg class="s3" width="24" height="24" viewBox="0 0 24 24"><path d="M20 8.5A10.5 10.5 0 1 0 22 15" fill="none" stroke="#2d3a4c" stroke-width="2"/><path d="M23 3v8h-8z" fill="#2d3a4c"/></svg>
      <i class="darr"></i>
      <span class="sideSep"></span>
      <svg width="24" height="24" viewBox="0 0 24 24"><path d="M1 4l2-3h18l2 3v19H1z" fill="#7f8fa8" stroke="#2d3a4c" stroke-width="1.2"/><path d="M1 4.5h22" stroke="#2d3a4c"/><path d="M4 8h4v3H4zM4 13h4v3H4zM4 18h4v3H4zM15 8h4v3h-4zM15 13h4v3h-4zM15 18h4v3h-4zM12 7v15" fill="none" stroke="#e6edf6" stroke-width=".9"/></svg>
    </aside>

    <div class="meter">
      {#each levels as l}<span style:background={l}></span>{/each}
    </div>
  </main>

  <footer class="status">
    <span class="cell w171 coords">X = 1224.1 Y = 715.91</span>
    <span class="cell w113">层高：4</span>
    <span class="cell w133">底标高：0</span>
    <span class="cell w103">0</span>
    <span class="cell w103">隐藏：0</span>
    <button class="sb w25"><svg width="13" height="13" viewBox="0 0 13 13"><path d="M1.5 0v12.500H13M1.500 6H6v6.500" fill="none" stroke="#444"/></svg></button>
    <button class="sb w36 on"><svg width="14" height="18" viewBox="0 0 14 18"><path d="M1.5 2.5h11v15h-11z" fill="#fff" stroke="#3d8fe8"/><path d="M0 0h4.500v6H0z" fill="#f09a4a"/></svg><i class="tri"></i></button>
    <button class="sb w36"><svg width="16" height="17" viewBox="0 0 16 17"><path d="M1 5l7-4 7 4v7l-7 4-7-4zM1 5l7 4 7-4M8 9v7" fill="none" stroke="#555"/></svg><i class="tri"></i></button>
    <button class="sb w25"><svg width="17" height="20" viewBox="0 0 17 20"><path d="M1 1l15 18M16 1L1 19" stroke="#555"/></svg></button>
    <button class="sb w36"><svg width="18" height="14" viewBox="0 0 18 14"><path d="M0 13h17M1 13L12 2" stroke="#444"/><path d="M5 7l3 3" stroke="#333" stroke-width="3"/></svg><i class="tri"></i></button>
    <button class="sb w36"><svg width="18" height="16" viewBox="0 0 18 16"><path d="M3 1v6M0 4h6" stroke="#333"/><path d="M7 10h9v4H7z" fill="#333"/></svg><i class="tri"></i></button>
    <button class="sb txt w73">跨类型选择</button>
    <button class="sb txt w61">折线选择</button>
    <span class="cell bright">CAD图亮度：100%</span>
    <button class="sb w25 zm"><span class="round">−</span></button>
    <span class="track"><i></i></span>
    <button class="sb w25 zm"><span class="round">+</span></button>
    <span class="hint">按鼠标左键指定第一个角点，或 15.3846 FPS</span>
  </footer>
  <div class="taskbar"><span></span></div>
</div>

<style>
  :global(body) { margin: 0; background: #fff; overflow: hidden; }
  .app { width: 1440px; height: 862px; display: flex; flex-direction: column; font: 12px/16px "Open Sans", "Noto Sans CJK SC", "Liberation Sans", sans-serif; color: #333; position: relative; overflow: hidden; }
  .app::before { content: ""; position: absolute; left: 1075px; top: -3px; width: 283px; height: 3px; box-shadow: 0 1px 4px rgba(0,0,0,.7); background: #777; }
  i { display: block; }
  .ic { display: block; flex: none; overflow: visible; }
  .ic :global(text) { font-family: "Liberation Sans", sans-serif; }

  .tri { width: 0; height: 0; border: 3px solid transparent; border-top: 3px solid #555; border-bottom: 0; flex: none; }
  .tri.lite { border-top-color: #b5b5b5; }

  .top { height: 41px; display: flex; box-sizing: border-box; border-bottom: 1px solid #d9d9d9; background: #fff; flex: none; }
  .logoCell { width: 47px; height: 40px; flex: none; box-sizing: border-box; border-right: 1px solid #eee; padding: 7px 0 0 9px; position: relative; }
  .logo { width: 30px; height: 30px; }
  .logo svg { display: block; }
  .grip { position: absolute; right: 3px; bottom: 0; width: 0; height: 0; border-left: 4px solid transparent; border-bottom: 4px solid #777; }
  .topMain { flex: 1; display: flex; flex-direction: column; min-width: 0; }
  .titleRow { height: 22px; display: flex; align-items: center; }
  .quick { width: 500px; margin-left: 8px; display: flex; align-items: center; gap: 7px; flex: none; height: 20px; }
  .qi { display: flex; align-items: center; gap: 3px; }
  .more { width: 6px; height: 5px; border-top: 1px solid #666; position: relative; margin-left: 1px; }
  .more::after { content: ""; position: absolute; left: 0; top: 2px; border: 3px solid transparent; border-top-color: #666; border-bottom: 0; }
  .title { width: 171px; flex: none; white-space: nowrap; font-size: 12px; color: #333; padding-top: 1px; }
  .blur { display: flex; height: 16px; width: 157px; flex: none; filter: blur(.5px); }
  .blur span { flex: 1; }
  .winBtns { margin-left: 460px; display: flex; gap: 24px; }
  .winBtns svg:nth-child(2) { margin-left: 1px; }
  .tabRow { height: 18px; display: flex; justify-content: space-between; }
  .tabs { display: flex; margin-left: 3px; }
  .tab { padding: 0 13px; height: 18px; line-height: 19px; color: #444; }
  .tab.on { background: #5fa9f3; color: #fff; border-radius: 5px 5px 0 0; }
  .tab.wideTab { padding-right: 15px; }
  .tools { display: flex; align-items: center; height: 18px; margin-right: 6px; }
  .head { margin-left: 7px; }
  .q { font: 700 16px/16px "Liberation Sans", sans-serif; color: #999; margin-left: 8px; }
  .tools .tri { margin-left: 2px; }
  .shirt { margin-left: 7px; }
  .search { width: 150px; height: 17px; box-sizing: border-box; border: 1px solid #aaa; margin-left: 5px; display: flex; align-items: center; justify-content: space-between; padding: 0 5px 0 2px; color: #888; }
  .search span { line-height: 15px; padding-top: 2px; }
  .up { margin-left: 3px; }

  .ribbon { height: 102px; flex: none; display: flex; box-sizing: border-box; border-bottom: 1px solid #8a8d90; background: linear-gradient(#fff 0, #fff 52%, #e9ebec 100%); }
  .group { box-sizing: border-box; border-right: 2px solid #dcdedf; display: flex; flex-direction: column; height: 97px; margin-top: 3px; }
  .gbody { display: flex; height: 73px; padding-top: 2px; box-sizing: border-box; }
  .big { height: 67px; display: flex; flex-direction: column; align-items: center; box-sizing: border-box; flex: none; }
  .big.active { background: #c6d7ee; }
  .bigIcon { height: 33px; display: flex; align-items: center; justify-content: center; margin-top: 1px; }
  .bigText { margin-top: 3px; }
  .col { display: flex; flex-direction: column; gap: 7px; padding-top: 2px; flex: none; }
  .item { display: flex; align-items: center; gap: 3px; height: 16px; white-space: nowrap; }
  .item.off { color: #aeb0b2; }
  .item .tri { margin-left: 3px; }
  .item .tri.wide { margin-left: 6px; }
  .glabel { height: 20px; display: flex; align-items: center; justify-content: center; gap: 7px; margin-top: 3px; padding-left: 4px; }
  .tri.big3 { border-width: 4px; border-top-width: 4px; border-bottom: 0; border-top-color: #555; }

  .selbar { height: 27px; flex: none; box-sizing: border-box; background: #c8cbcf; border-bottom: 1px solid #888; padding: 3px 0 0 2px; display: flex; gap: 5px; }
  .sel { width: 100px; height: 21px; box-sizing: border-box; background: #fff; border: 1px solid #e4e4e4; display: flex; align-items: center; justify-content: space-between; padding: 0 6px 0 3px; color: #222; }

  .canvas { height: 660px; flex: none; background: #000; position: relative; overflow: hidden; }
  .cad { display: block; }
  .t { font-family: "Noto Sans CJK SC", "Liberation Sans", sans-serif; }
  .axisT { font-family: "Liberation Sans", sans-serif; font-size: 15px; }
  .handle { position: absolute; top: 281px; width: 4px; height: 100px; background: #5f6a74; display: flex; align-items: center; }
  .handle.left { left: 0; }
  .handle.right { right: 0; }
  .handle i { width: 0; height: 0; border: 4px solid transparent; border-left: 3px solid #b4bac0; border-right: 0; }
  .handle.right i { transform: scaleX(-1); }
  .side { position: absolute; right: 0; top: 1px; width: 33px; height: 226px; background: #888b90; border-radius: 4px 0 0 0; box-sizing: border-box; padding-top: 10px; display: flex; flex-direction: column; align-items: center; }
  .side svg { display: block; flex: none; overflow: visible; }
  .s1 { margin-top: 7px; }
  .s2 { margin-top: 5px; }
  .s3 { margin-top: 5px; }
  .darr { width: 0; height: 0; border: 3px solid transparent; border-top: 3px solid #333; border-bottom: 0; margin-top: 6px; }
  .sideSep { width: 23px; height: 1px; background: #5d6066; margin: 6px 0 4px; flex: none; }
  .meter { position: absolute; right: 0; top: 432px; width: 9px; height: 57px; box-sizing: border-box; background: #2a3040; border-radius: 3px 0 0 3px; padding: 4px 0 4px 3px; display: flex; flex-direction: column; gap: 1.4px; }
  .meter span { height: 2px; display: block; flex: none; }

  .status { height: 30px; flex: none; background: #dcdcdf; display: flex; align-items: center; color: #444; white-space: nowrap; padding-left: 2px; box-sizing: border-box; }
  .cell { display: block; flex: none; }
  .coords { word-spacing: 3px; }
  .w171 { width: 171px; }
  .w113 { width: 113px; }
  .w133 { width: 133px; }
  .w103 { width: 103px; }
  .sb { height: 24px; box-sizing: border-box; margin: 0 3px 0 0; padding: 0 4px; border: 1px solid #999; background: #d4d4d6; display: flex; align-items: center; justify-content: center; gap: 4px; font: inherit; color: #444; flex: none; }
  .sb svg { display: block; flex: none; }
  .sb.on { background: #fff; border-color: #3d8fe8; }
  .w25 { width: 25px; }
  .w36 { width: 36px; }
  .w73 { width: 73px; }
  .w61 { width: 61px; }
  .sb.txt { padding: 0; }
  .bright { margin-left: 3px; width: 113px; }
  .zm { margin: 0; padding: 0; }
  .round { width: 13px; height: 13px; border-radius: 50%; background: #fff; border: 1px solid #777; display: flex; align-items: center; justify-content: center; font: 700 12px/12px "Liberation Sans", sans-serif; color: #333; }
  .track { width: 45px; height: 3px; background: #c8c8ca; position: relative; flex: none; }
  .track i { position: absolute; right: 0; top: -8px; width: 8px; height: 18px; box-sizing: border-box; border-radius: 3px; background: #fff; border: 1px solid #555; }
  .hint { margin-left: 1px; }
  .taskbar { height: 2px; background: #10303c; position: relative; flex: none; }
  .taskbar span { position: absolute; left: 247px; width: 48px; height: 2px; background: #4a6060; display: block; }
</style>
